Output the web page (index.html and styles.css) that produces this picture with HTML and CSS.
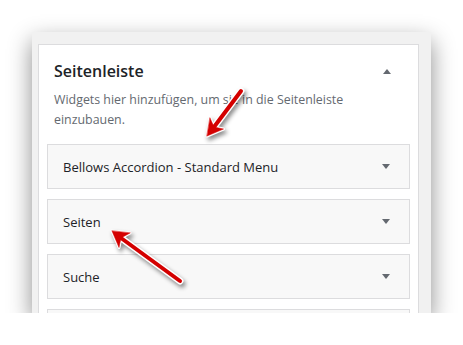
FILE: index.html
```html
<!DOCTYPE html>
<html lang="de">
  <head>
    <meta charset="UTF-8" />
    <meta name="viewport" content="width=device-width, initial-scale=1.0" />
    <title>Seitenleiste</title>
    <link rel="stylesheet" href="styles.css">
  </head>

  <body>
    <section class="rahmen">
      <div class="leiste">
        <div class="kopf">
          <h2>Seitenleiste</h2>
          <span class="pfeil-auf"></span>
        </div>
        <p class="beschreibung">Widgets hier hinzufügen, um sie in die Seitenleiste einzubauen.</p>

        <div class="widget"><h3>Bellows Accordion - Standard Menu</h3><span class="pfeil-ab"></span></div>
        <div class="widget"><h3>Seiten</h3><span class="pfeil-ab"></span></div>
        <div class="widget"><h3>Suche</h3><span class="pfeil-ab"></span></div>
        <div class="widget"></div>
      </div>
    </section>

    <svg class="markierung" width="463" height="345" viewBox="0 0 463 345">
      <g class="schatten">
        <g stroke="#fff" stroke-linejoin="round" stroke-linecap="round" fill="#fff">
          <line x1="241" y1="91" x2="214" y2="127" stroke-width="7" />
          <polygon points="207,136 223.5,129 214,127 210,118" stroke-width="3" />
          <line x1="180" y1="281" x2="121" y2="238" stroke-width="7" />
          <polygon points="112,231 119,247.5 121,238 130,233" stroke-width="3" />
        </g>
        <g stroke="#d40000" stroke-linecap="round" fill="#d40000">
          <line x1="241" y1="91" x2="214" y2="127" stroke-width="4" />
          <polygon points="207,136 223.5,129 214,127 210,118" stroke-width="0.5" />
          <line x1="180" y1="281" x2="121" y2="238" stroke-width="4" />
          <polygon points="112,231 119,247.5 121,238 130,233" stroke-width="0.5" />
        </g>
      </g>
    </svg>
  </body>
</html>
```

FILE: styles.css
```css
body {
  margin: 0;
  background-color: #fff;
  font-family: "Open Sans", "Noto Sans", Arial, sans-serif;
}

.rahmen {
  margin: 32px 0 0 32px;
  width: 399px;
  height: 281px;
  box-sizing: border-box;
  padding: 12px 12px 0 6px;
  background-color: #f1f1f1;
  overflow: hidden;
  box-shadow: 0 9px 22px rgba(0, 0, 0, 0.45);
}

.leiste {
  background-color: #fff;
  border: 1px solid #dcdcde;
  padding: 0 8px;
  height: 400px;
}

.kopf {
  display: flex;
  justify-content: space-between;
  align-items: center;
  padding: 14px 19px 0 7px;
}

.kopf h2 {
  margin: 0;
  font-size: 16px;
  font-weight: 600;
  line-height: 24px;
  color: #1d2327;
}

.pfeil-auf {
  width: 0;
  height: 0;
  border-left: 4px solid transparent;
  border-right: 4px solid transparent;
  border-bottom: 5px solid #646970;
}

.beschreibung {
  margin: 7px 0 0;
  padding: 0 7px 4px;
  font-size: 12.4px;
  line-height: 20px;
  color: #646970;
}

.widget {
  display: flex;
  justify-content: space-between;
  align-items: center;
  height: 43px;
  margin-top: 10px;
  padding: 0 19px 0 15px;
  background-color: #f8f8f8;
  border: 1px solid #dcdcde;
}

.widget h3 {
  margin: 0;
  font-size: 13px;
  font-weight: 500;
  color: #1d2327;
}

.pfeil-ab {
  width: 0;
  height: 0;
  border-left: 4px solid transparent;
  border-right: 4px solid transparent;
  border-top: 5px solid #646970;
}

.markierung {
  position: absolute;
  left: 0;
  top: 0;
}

.schatten {
  filter: drop-shadow(2px 3px 2px rgba(0, 0, 0, 0.45));
}
```
